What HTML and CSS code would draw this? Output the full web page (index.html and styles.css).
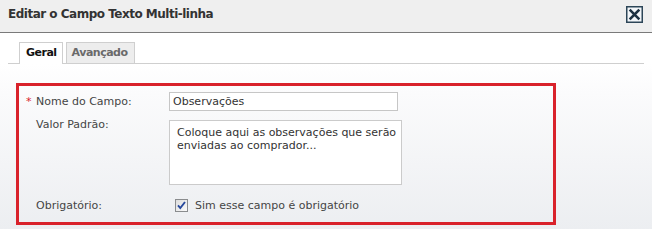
FILE: index.html
```html
<!DOCTYPE html>
<html lang="pt-BR">
<head>
<meta charset="utf-8">
<title>Editar o Campo Texto Multi-linha</title>
<link rel="stylesheet" href="styles.css">
</head>
<body>
<div class="dialog">
  <header class="titlebar">
    <h1 class="title">Editar o Campo Texto Multi-linha</h1>
    <button class="close" type="button" aria-label="Fechar">
      <svg width="17" height="17" viewBox="0 0 17 17">
        <rect x="0.75" y="0.75" width="15.5" height="15.5" fill="#f3f6f9" stroke="#2d4658" stroke-width="1.5"/>
        <path d="M4.6 4.6 L12.4 12.4 M12.4 4.6 L4.6 12.4" stroke="#1c3142" stroke-width="2.6" stroke-linecap="square"/>
      </svg>
    </button>
  </header>
  <div class="content">
    <ul class="tabs">
      <li class="tab tab-active">Geral</li>
      <li class="tab">Avançado</li>
    </ul>
    <div class="panel">
      <div class="form">
        <label class="lbl"><span class="req">*</span>Nome do Campo:</label>
        <input class="field" type="text" value="Observações">
        <label class="lbl lbl-area">Valor Padrão:</label>
        <textarea class="area">Coloque aqui as observações que serão enviadas ao comprador...</textarea>
        <label class="lbl lbl-check">Obrigatório:</label>
        <label class="check">
          <span class="box">
            <svg width="13" height="13" viewBox="0 0 13 13">
              <defs>
                <linearGradient id="cbg" x1="0" y1="0" x2="1" y2="1">
                  <stop offset="0" stop-color="#dcdcdc"/>
                  <stop offset="1" stop-color="#fbfbfb"/>
                </linearGradient>
              </defs>
              <rect x="0.5" y="0.5" width="12" height="12" fill="url(#cbg)" stroke="#8a8c8e"/>
              <path d="M3 6.3 L5.3 9 L10 3" fill="none" stroke="#26489c" stroke-width="1.9"/>
            </svg>
          </span>
          <span class="check-text">Sim esse campo é obrigatório</span>
        </label>
      </div>
    </div>
  </div>
</div>
</body>
</html>
```
FILE: styles.css
```css
html, body {
  margin: 0;
  padding: 0;
}
body {
  width: 652px;
  height: 229px;
  overflow: hidden;
  font-family: "DejaVu Sans", "Noto Sans", sans-serif;
  font-size: 11px;
  color: #444;
}
.dialog {
  height: 229px;
  display: flex;
  flex-direction: column;
}
.titlebar {
  box-sizing: border-box;
  height: 33px;
  background: #efefef;
  border-bottom: 1px solid #7a7a7a;
  box-shadow: 0 1px 0 #c4c4c4;
  display: flex;
  justify-content: space-between;
  align-items: flex-start;
  padding: 7px 9px 0 8px;
}
.title {
  margin: 0;
  font-size: 12px;
  line-height: 14px;
  font-weight: bold;
  letter-spacing: -0.5px;
  color: #333;
}
.close {
  margin: -1px 0 0 0;
  padding: 0;
  border: 0;
  background: none;
  width: 17px;
  height: 17px;
  display: block;
}
.close svg {
  display: block;
}
.content {
  flex: 1;
  background: linear-gradient(to bottom, #ffffff 0px, #ffffff 31px, #fbfbfc 60px, #eceef1 196px);
}
.tabs {
  list-style: none;
  margin: 9px 8px 0 8px;
  padding: 0 0 0 11px;
  border-bottom: 1px solid #cfcfcf;
  display: flex;
  align-items: flex-end;
  gap: 3px;
  height: 21px;
}
.tab {
  box-sizing: border-box;
  height: 21px;
  line-height: 20px;
  border: 1px solid #cfcfcf;
  border-bottom: none;
  padding: 0 6px 0 5px;
  background: #ededed;
  color: #6a6a6a;
  font-weight: bold;
  letter-spacing: -0.5px;
}
.tab-active {
  height: 22px;
  margin-bottom: -1px;
  background: #fff;
  color: #111;
  padding: 0 5px 0 6px;
}
.panel {
  padding: 19px 0 0 16px;
}
.form {
  box-sizing: border-box;
  width: 540px;
  border: 3px solid #d9222b;
  padding: 6px 0 7px 7px;
  display: grid;
  grid-template-columns: 143px auto;
  align-items: start;
}
.lbl {
  line-height: 19px;
  color: #454545;
}
.req {
  display: inline-block;
  width: 10px;
  color: #d9222b;
}
.lbl-area {
  line-height: 13px;
  margin-top: 7px;
  padding-left: 10px;
}
.lbl-check {
  line-height: 18px;
  margin-top: 12px;
  padding-left: 10px;
}
.field {
  box-sizing: border-box;
  width: 229px;
  height: 19px;
  margin: 0;
  border: 1px solid #c6c6c6;
  padding: 0 3px;
  font-family: "DejaVu Sans", "Noto Sans", sans-serif;
  font-size: 11px;
  color: #333;
  background: #fff;
  outline: none;
}
.area {
  box-sizing: border-box;
  width: 233px;
  height: 65px;
  margin: 9px 0 0 0;
  border: 1px solid #cbcbcb;
  padding: 5px 2px 0 7px;
  font-family: "DejaVu Sans", "Noto Sans", sans-serif;
  font-size: 11px;
  line-height: 13px;
  color: #333;
  background: #fff;
  resize: none;
  overflow: hidden;
  display: block;
}
.check {
  margin-top: 12px;
  height: 18px;
  display: flex;
  align-items: center;
  color: #454545;
  line-height: 18px;
}
.box {
  display: block;
  width: 13px;
  height: 13px;
  margin-left: 6px;
  margin-top: -2px;
}
.box svg {
  display: block;
}
.check-text {
  margin-left: 7px;
}
```
